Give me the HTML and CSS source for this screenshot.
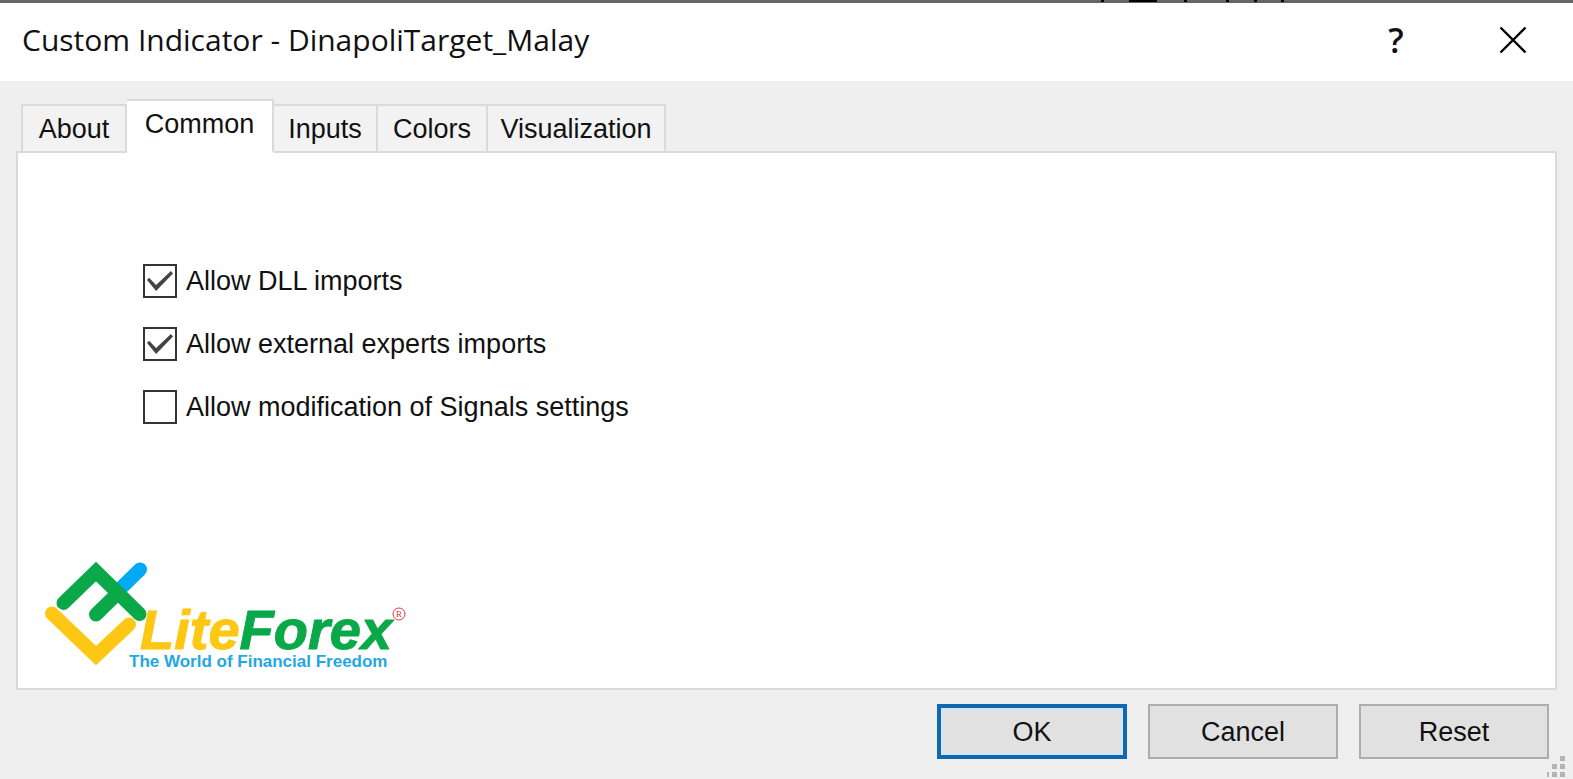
FILE: index.html
```
<!DOCTYPE html>
<html lang="en">
<head>
  <meta charset="UTF-8">
  <title>Custom Indicator - DinapoliTarget_Malay</title>
  <meta name="viewport" content="width=device-width, initial-scale=1.0">
  <link rel="stylesheet" href="styles.css">
</head>
<body>

  <div class="top-edge"></div>
  <header class="titlebar">
    <h1>Custom Indicator - DinapoliTarget_Malay</h1>
    <button class="title-btn" type="button" aria-label="Help">?</button>
    <button class="title-btn" type="button" aria-label="Close">
      <svg width="28" height="28" viewBox="0 0 28 28">
        <path d="M1.500 1.500L26.500 26.500M26.500 1.500L1.500 26.500" fill="none" stroke="#000" stroke-width="2.400"/>
      </svg>
    </button>
  </header>

  <main>
    <div class="tabs" role="tablist">
      <button class="tab" type="button" role="tab">About</button>
      <button class="tab active" type="button" role="tab" aria-selected="true">Common</button>
      <button class="tab" type="button" role="tab">Inputs</button>
      <button class="tab" type="button" role="tab">Colors</button>
      <button class="tab" type="button" role="tab">Visualization</button>
    </div>

    <section class="panel" role="tabpanel">
      <div class="options">
        <label class="option"><input type="checkbox" checked>Allow DLL imports</label>
        <label class="option"><input type="checkbox" checked>Allow external experts imports</label>
        <label class="option"><input type="checkbox">Allow modification of Signals settings</label>
      </div>

      <svg class="logo" width="390" height="120" viewBox="0 0 390 120" role="img" aria-label="LiteForex">
        <g fill="none" stroke-width="14" stroke-linecap="round">
          <path d="M90 38L110 18.500" stroke="#03a9f4"/>
          <path d="M22 62.500L66 104.500L99 73.500" stroke="#fdc713"/>
          <path d="M33.500 52L66 20.500L109.500 63M66 63.500L88 42" stroke="#0ba84a"/>
        </g>
        <text class="logo-name" x="110" y="98"><tspan class="lite">Lite</tspan><tspan class="forex">Forex</tspan></text>
        <circle cx="369" cy="63" r="6" fill="none" stroke="#e03a3a"/>
        <text class="logo-mark" x="369" y="66">R</text>
        <text class="logo-slogan" x="99" y="116">The World of Financial Freedom</text>
      </svg>
    </section>
  </main>

  <footer>
    <button class="btn default" type="button">OK</button>
    <button class="btn" type="button">Cancel</button>
    <button class="btn" type="button">Reset</button>
    <svg class="grip" width="19" height="22" viewBox="0 0 19 22">
      <path d="M13 0h5v5h-5zM5 8h5v5h-5zM13 8h5v5h-5zM0 16h2v5h-2zM5 16h5v5h-5zM13 16h5v5h-5z" fill="#b4b4b4"/>
    </svg>
  </footer>

</body>
</html>
```
FILE: styles.css
```
/* Base */
* {
  box-sizing: border-box;
}
body {
  margin: 0;
  min-height: 100vh;
  display: flex;
  flex-direction: column;
  position: relative;
  background: #efefef;
  color: #111;
  font-family: "Liberation Sans", Arial, sans-serif;
  font-size: 27px;
  line-height: 36px;
}
button {
  font: inherit;
  color: inherit;
  padding: 0;
}

/* Strip of the window behind */
.top-edge {
  height: 3px;
  background:
    linear-gradient(#000, #000) 70.1% 0 / 3px 2px no-repeat,
    linear-gradient(#000, #000) 73.1% 0 / 28px 2px no-repeat,
    linear-gradient(#000, #000) 75.4% 0 / 3px 2px no-repeat,
    linear-gradient(#000, #000) 78.1% 0 / 3px 2px no-repeat,
    linear-gradient(#000, #000) 79.9% 0 / 3px 2px no-repeat,
    linear-gradient(#000, #000) 81.6% 0 / 3px 2px no-repeat,
    #666;
}

/* Title bar */
.titlebar {
  display: flex;
  align-items: center;
  height: 78px;
  padding: 0 32px 5px 22px;
  background: #fff;
  font-family: "Open Sans", sans-serif;
}
.titlebar h1 {
  flex: 1;
  margin: 0;
  font-size: 30px;
  font-weight: normal;
}
.title-btn {
  display: flex;
  align-items: center;
  justify-content: center;
  width: 56px;
  height: 56px;
  margin-left: 61px;
  background: none;
  border: none;
  font-size: 34px;
  font-weight: 600;
}

/* Tabs */
main {
  flex: 1;
  display: flex;
  flex-direction: column;
  padding: 18px 16px 0;
}
.tabs {
  display: grid;
  grid-template-columns: 106px 147px 104px 110px 178px;
  align-items: end;
  padding-left: 5px;
  margin-bottom: -2px;
}
.tab {
  height: 49px;
  background: #f2f2f2;
  border: 2px solid #dadada;
  border-left: none;
}
.tab:first-child {
  border-left: 2px solid #dadada;
}
.tab.active {
  height: 54px;
  padding-bottom: 4px;
  background: #fff;
  border-bottom-color: #fff;
  z-index: 1;
}

/* Panel */
.panel {
  flex: 1;
  display: flex;
  flex-direction: column;
  justify-content: space-between;
  background: #fff;
  border: 2px solid #dadada;
}
.options {
  display: flex;
  flex-direction: column;
  gap: 27px;
  padding: 110px 0 0 125px;
}
.option {
  display: flex;
  align-items: center;
  gap: 9px;
}
.option input {
  appearance: none;
  display: grid;
  place-items: center;
  width: 34px;
  height: 34px;
  margin: 0;
  border: 2px solid #333;
  background: #fff;
}
.option input:checked::before {
  content: "";
  width: 26px;
  height: 20px;
  background: #444;
  clip-path: polygon(0 45%, 8% 34%, 35% 70%, 92% 0, 100% 12%, 35% 100%);
}

/* Logo */
.logo {
  margin: 0 0 17px 12px;
}
.logo-name {
  font: italic bold 56px "Liberation Sans", sans-serif;
  stroke-width: 1px;
  stroke-linejoin: round;
}
.lite {
  fill: #fdc713;
  stroke: #fdc713;
}
.forex {
  fill: #0ba84a;
  stroke: #0ba84a;
}
.logo-mark {
  font: 9px "Liberation Serif", serif;
  fill: #e03a3a;
  text-anchor: middle;
}
.logo-slogan {
  font: bold 17px "Liberation Sans", sans-serif;
  fill: #1fa8e4;
}

/* Bottom buttons */
footer {
  display: flex;
  justify-content: flex-end;
  gap: 21px;
  padding: 14px 24px 20px;
}
.btn {
  width: 190px;
  height: 55px;
  background: #e1e1e1;
  border: 2px solid #adadad;
}
.btn.default {
  border: 4px solid #1268ae;
  box-shadow: inset 0 0 0 2px #cfe8fa;
}
.grip {
  position: absolute;
  right: 7px;
  bottom: 1px;
}
```
